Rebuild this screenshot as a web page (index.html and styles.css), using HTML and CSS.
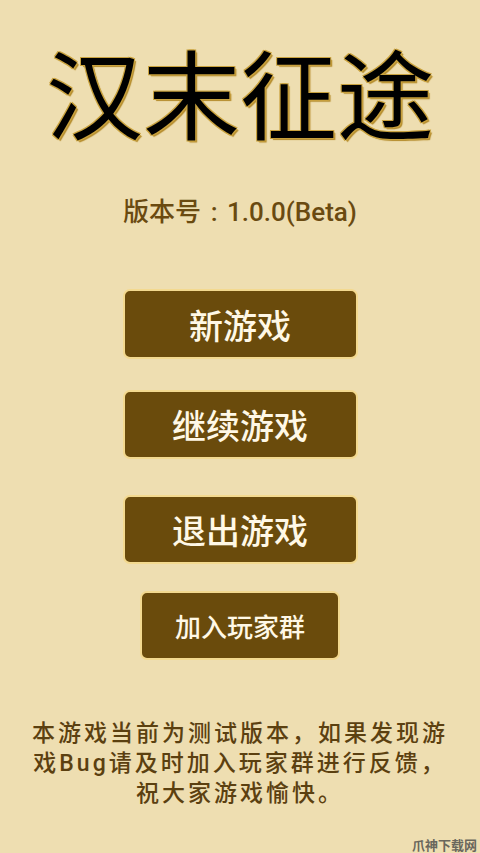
FILE: index.html
```html
<!DOCTYPE html>
<html lang="zh-CN">
<head>
<meta charset="utf-8">
<title>汉末征途</title>
<link rel="stylesheet" href="styles.css">
</head>
<body>
<main class="screen">
  <h1 class="title">汉末征途</h1>
  <p class="version">版本号<span class="colon">:</span>1.0.0(Beta)</p>
  <nav class="menu">
    <button class="btn btn-big">新游戏</button>
    <button class="btn btn-big btn-continue">继续游戏</button>
    <button class="btn btn-big btn-exit">退出游戏</button>
    <button class="btn btn-small">加入玩家群</button>
  </nav>
  <div class="notice">
    <span class="line">本游戏当前为测试版本，如果发现游</span>
    <span class="line">戏Bug请及时加入玩家群进行反馈，</span>
    <span class="line">祝大家游戏愉快。</span>
  </div>
  <div class="watermark">爪神下载网</div>
</main>
</body>
</html>
```

FILE: styles.css
```css
* { box-sizing: border-box; }
html, body {
  margin: 0;
  padding: 0;
  background: #eedeb1;
}
.screen {
  position: relative;
  width: 480px;
  height: 853px;
  display: flex;
  flex-direction: column;
  align-items: center;
  font-family: "Noto Sans CJK SC", "Noto Sans", sans-serif;
  overflow: hidden;
}
.title {
  margin: 35px 0 0;
  font-size: 97px;
  line-height: 110px;
  font-weight: 400;
  color: #000;
  text-shadow: 1px 1px 0 #c9a23e, -1px -1px 0 #c9a23e, 1px -1px 0 #c9a23e, -1px 1px 0 #c9a23e, 2px 2px 1px #b38a2a;
}
.version {
  margin: 52px 0 0;
  font-family: Roboto, "Noto Sans CJK SC", sans-serif;
  font-size: 26px;
  line-height: 30px;
  font-weight: 500;
  color: #6a4a10;
  white-space: nowrap;
}
.colon {
  display: inline-block;
  width: 26px;
  text-align: center;
}
.menu {
  margin-top: 62px;
  display: flex;
  flex-direction: column;
  align-items: center;
}
.btn {
  font-family: inherit;
  font-weight: 500;
  background: #6a4b0c;
  color: #fff8e6;
  border: 2px solid #f3d98f;
  border-radius: 7px;
  padding: 0;
  display: flex;
  align-items: center;
  justify-content: center;
  height: 70px;
}
.btn-big {
  width: 235px;
  font-size: 34px;
}
.btn-continue { margin-top: 31px; height: 69px; }
.btn-exit { margin-top: 36px; height: 69px; }
.btn-small {
  width: 200px;
  height: 69px;
  font-size: 26px;
  margin-top: 27px;
}
.notice {
  margin-top: 59px;
  display: flex;
  flex-direction: column;
  align-items: center;
  font-family: Roboto, "Noto Sans CJK SC", sans-serif;
  font-size: 23px;
  font-weight: 500;
  letter-spacing: 3px;
  color: #5b4010;
}
.line {
  display: block;
  height: 30px;
  line-height: 30px;
  white-space: nowrap;
}
.watermark {
  position: absolute;
  right: 3px;
  bottom: 0;
  font-size: 13px;
  line-height: 16px;
  font-weight: 700;
  color: #6a675c;
}
```
